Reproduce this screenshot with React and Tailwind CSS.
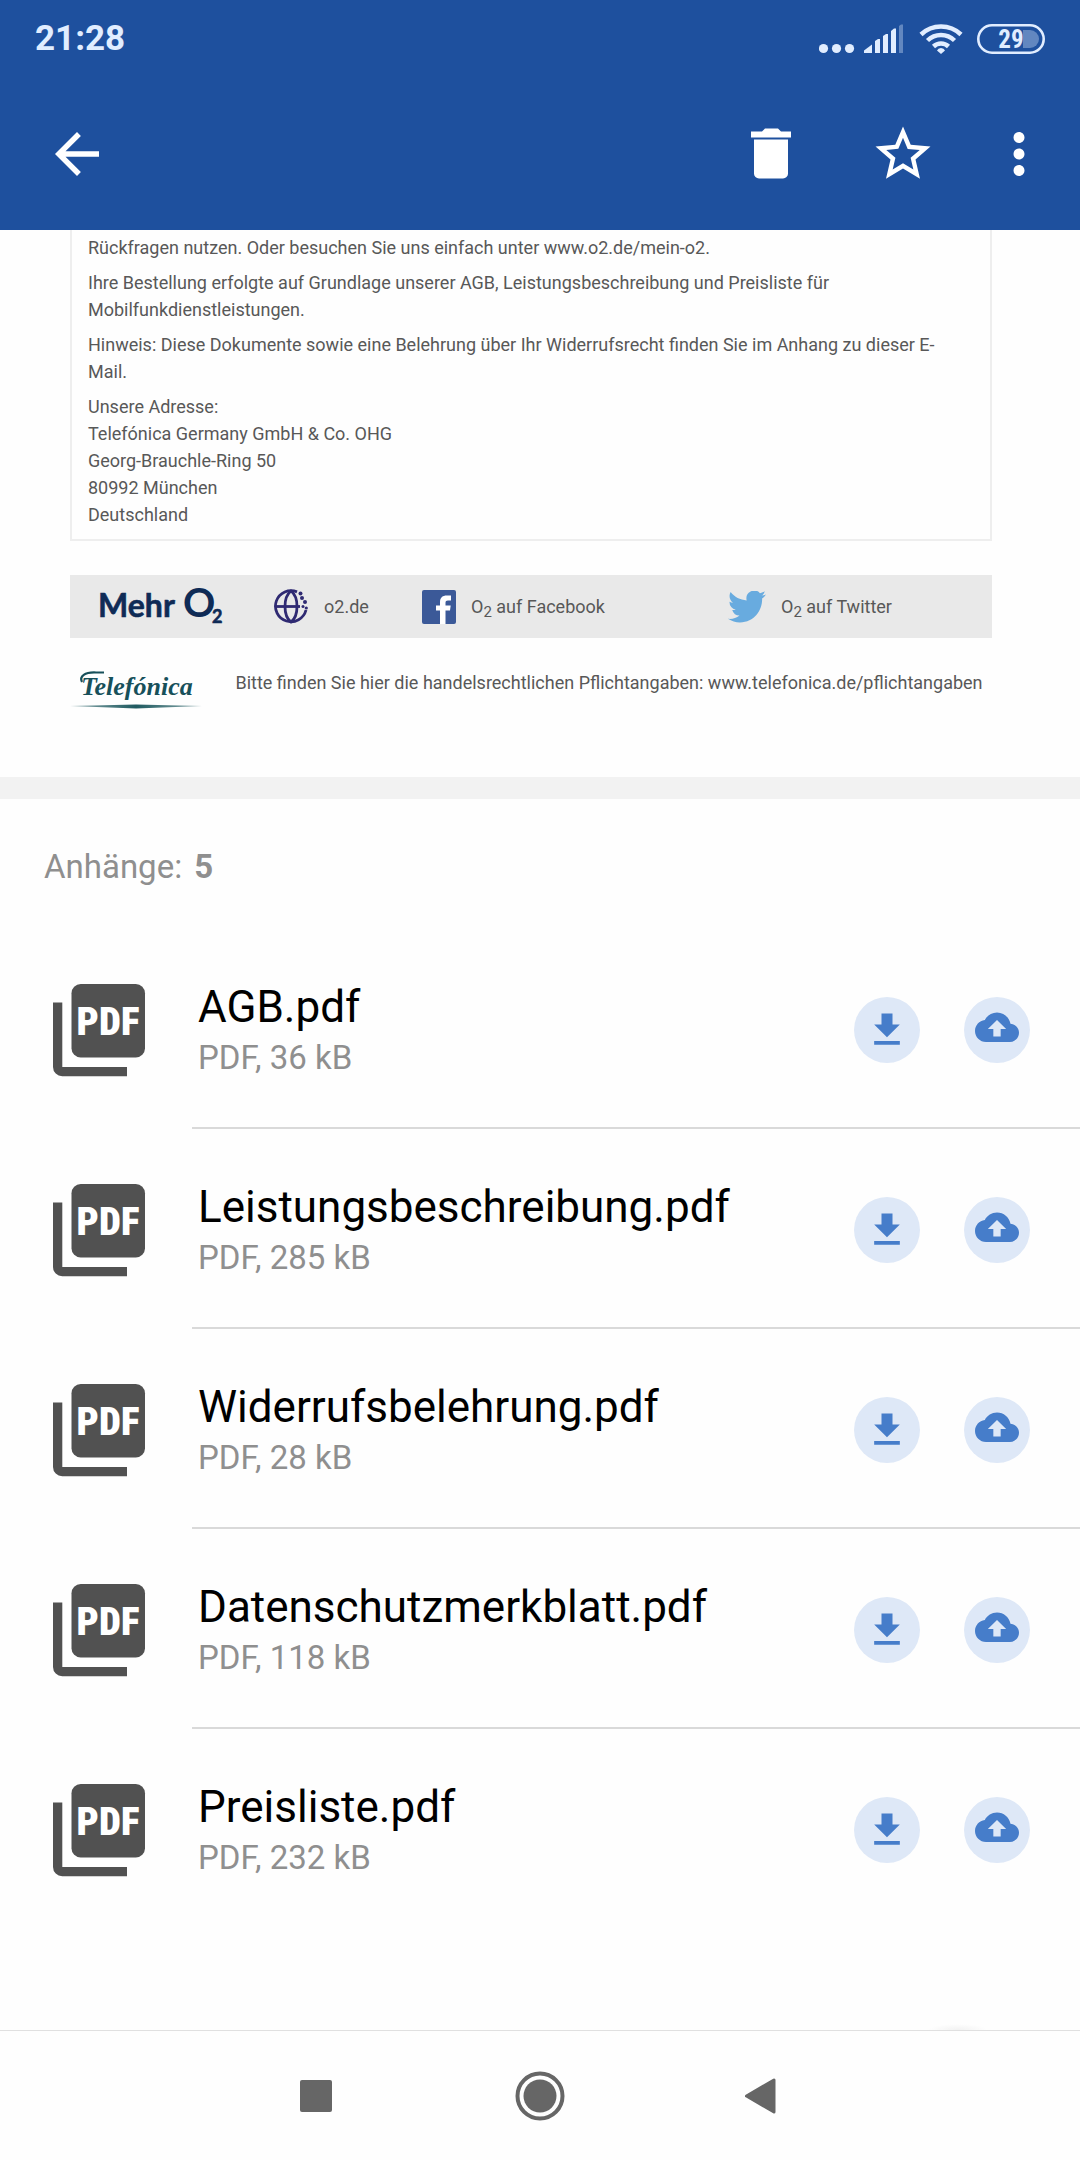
import { MdArrowBack, MdMoreVert, MdStarBorder } from 'react-icons/md';

const attachments = [
  { name: 'AGB.pdf', size: '36 kB' },
  { name: 'Leistungsbeschreibung.pdf', size: '285 kB' },
  { name: 'Widerrufsbelehrung.pdf', size: '28 kB' },
  { name: 'Datenschutzmerkblatt.pdf', size: '118 kB' },
  { name: 'Preisliste.pdf', size: '232 kB' },
];

const StatusBar = () => (
  <div className="flex items-center justify-between h-[77px] px-[35px] text-[#e1edff]">
    <span className="text-[35px] leading-[40px] font-bold">21:28</span>
    <div className="flex items-center">
      <svg width="84" height="30" viewBox="0 0 84 30" fill="currentColor">
        <circle cx="4.500" cy="24.500" r="4.600" />
        <circle cx="17.500" cy="24.500" r="4.600" />
        <circle cx="30.500" cy="24.500" r="4.600" />
        <path d="M45 29v-2.500l8-6v8.500z" />
        <path d="M56 29V17l3-2h2v14z" />
        <path d="M64 29V12l3-2h2v19z" />
        <path d="M72 29V7l3-2.500h2V29z" />
        <path d="M80 29V2l2-1.500h3V29z" opacity="0.350" />
      </svg>
      <svg className="ml-4" width="44" height="30" viewBox="0 0 44 30" fill="none" stroke="currentColor" strokeWidth="4.500">
        <path d="M2 10.500a29 29 0 0 1 40 0" />
        <path d="M8.500 16.500a19.500 19.500 0 0 1 27 0" />
        <path d="M14.500 22.500a11 11 0 0 1 15 0" />
        <path d="M22 30l-4-3.500q1-2.500 4-2.500t4 2.500z" fill="currentColor" stroke="none" />
      </svg>
      <svg className="ml-[14px]" width="68" height="30" viewBox="0 0 68 30">
        <rect x="1.300" y="1.300" width="65.400" height="27.400" rx="13.700" fill="none" stroke="currentColor" strokeWidth="2.600" />
        <path d="M46 6h7a9 9 0 0 1 0 18h-7z" fill="currentColor" opacity="0.350" />
        <text x="34" y="24" textAnchor="middle" fill="currentColor" className="font-['Roboto_Condensed','Roboto',sans-serif] text-[25px] font-bold">29</text>
      </svg>
    </div>
  </div>
);

const Toolbar = () => (
  <div className="flex items-center h-[153px] pl-[44px] pr-[11px] text-white">
    <button type="button" aria-label="Zurück">
      <MdArrowBack size={66} />
    </button>
    <div className="flex items-center ml-auto">
      <button type="button" aria-label="Löschen" className="flex justify-center w-[132px]">
        <svg width="66" height="66" viewBox="0 0 66 66" fill="currentColor">
          <path d="M13 10.500h11l3-3h13l3 3h10v6H13z" />
          <path d="M16 18.500h34v34a5 5 0 0 1-5 5H21a5 5 0 0 1-5-5z" />
        </svg>
      </button>
      <button type="button" aria-label="Markieren" className="flex justify-center w-[132px]">
        <MdStarBorder size={66} />
      </button>
      <button type="button" aria-label="Mehr" className="flex justify-center w-[100px]">
        <MdMoreVert size={66} />
      </button>
    </div>
  </div>
);

const GlobeIcon = () => (
  <svg width="34" height="35" viewBox="0 0 34 35" fill="none" stroke="#2f2a72" strokeWidth="2.800">
    <path d="M23 2.900A15.500 15.500 0 1 0 32 21" />
    <path d="M17 2C9 8 9 27 17 33C25 27 25 8 17 2z" />
    <path d="M2 17.500h24" />
    <g fill="#2f2a72" stroke="none">
      <circle cx="26.500" cy="4.500" r="2" />
      <circle cx="28" cy="9" r="2" />
      <circle cx="31" cy="13" r="2" />
      <circle cx="29" cy="17.500" r="1.500" />
      <circle cx="32.300" cy="19" r="1.600" />
    </g>
  </svg>
);

const FacebookIcon = () => (
  <svg width="34" height="34" viewBox="0 0 34 34">
    <rect width="34" height="34" rx="2" fill="#3b5998" />
    <path d="M18 34V20.500h-4v-5h4V12c0-4.500 3-6.500 6.500-6.500h4.500v5h-3c-1.800 0-2.500.8-2.500 2.200v2.800h5.200l-.7 5h-4.500V34z" fill="#fff" />
  </svg>
);

const TwitterIcon = () => (
  <svg width="38" height="32" viewBox="0 2.500 24 19.600" preserveAspectRatio="none" fill="#68abdf">
    <path d="M23.953 4.570a10 10 0 01-2.825.775 4.958 4.958 0 002.163-2.723c-.951.555-2.005.959-3.127 1.184a4.920 4.920 0 00-8.384 4.482C7.690 8.095 4.067 6.130 1.640 3.162a4.822 4.822 0 00-.666 2.475c0 1.710.870 3.213 2.188 4.096a4.904 4.904 0 01-2.228-.616v.060a4.923 4.923 0 003.946 4.827 4.996 4.996 0 01-2.212.085 4.936 4.936 0 004.604 3.417 9.867 9.867 0 01-6.102 2.105c-.390 0-.779-.023-1.170-.067a13.995 13.995 0 007.557 2.209c9.053 0 13.998-7.496 13.998-13.985 0-.210 0-.420-.015-.630A9.935 9.935 0 0024 4.590z" />
  </svg>
);

const TelefonicaLogo = () => (
  <svg className="shrink-0" width="132" height="42" viewBox="0 0 132 42" role="img" aria-label="Telefónica">
    <defs>
      <linearGradient id="swoosh">
        <stop offset="0" stopColor="#1f5a60" stopOpacity="0.500" />
        <stop offset="0.500" stopColor="#1f5a60" />
        <stop offset="1" stopColor="#1f5a60" stopOpacity="0.500" />
      </linearGradient>
    </defs>
    <text x="11" y="26" fill="#17505a" className="font-['Liberation_Serif',serif] text-[26px] font-bold italic">Telefónica</text>
    <path d="M12 13c-3-6 3-10 14-9.500h8" fill="none" stroke="#17505a" strokeWidth="2.200" />
    <path d="M0 37l66-1.500 66 1.500-66 2.500z" fill="url(#swoosh)" />
  </svg>
);

const PdfIcon = () => (
  <svg width="110" height="110" viewBox="0 0 110 110" fill="#515151">
    <path d="M9 27.500h9.300V92H83v9.200H18.300A9.200 9.200 0 0 1 9 92z" />
    <rect x="27.500" y="9" width="73.500" height="73.500" rx="9.200" />
    <text x="64" y="60" textAnchor="middle" fill="#fff" className="font-['Roboto_Condensed','Roboto',sans-serif] text-[39px] font-black">PDF</text>
  </svg>
);

const DownloadIcon = () => (
  <svg width="44" height="44" viewBox="0 0 24 24" fill="currentColor">
    <path d="M19 9h-4V3H9v6H5l7 7 7-7zM5 18v2h14v-2H5z" />
  </svg>
);

const CloudIcon = () => (
  <svg width="44" height="44" viewBox="0 1.500 24 24" fill="currentColor">
    <path d="M19.350 10.040C18.670 6.590 15.640 4 12 4 9.110 4 6.600 5.640 5.350 8.040 2.340 8.360 0 10.910 0 14c0 3.310 2.690 6 6 6h13c2.760 0 5-2.240 5-5 0-2.640-2.050-4.780-4.650-4.960zM14 13v4h-4v-4H7l5-5 5 5h-3z" />
  </svg>
);

const RoundButton = ({ label, children }) => (
  <button
    type="button"
    aria-label={label}
    className="flex items-center justify-center shrink-0 w-[66px] h-[66px] rounded-full bg-[#dee8f7] text-[#467dca]"
  >
    {children}
  </button>
);

const MailBody = () => (
  <section className="pl-[70px] pr-[88px] pb-[66px] text-[18px] leading-[27px] text-[#585858]">
    <div className="flex flex-col gap-2 border-2 border-t-0 border-[#eee] pt-1 pb-[11px] px-4">
      <p>Rückfragen nutzen. Oder besuchen Sie uns einfach unter www.o2.de/mein-o2.</p>
      <p>Ihre Bestellung erfolgte auf Grundlage unserer AGB, Leistungsbeschreibung und Preisliste für Mobilfunkdienstleistungen.</p>
      <p>
        Hinweis: Diese Dokumente sowie eine Belehrung über Ihr Widerrufsrecht finden Sie im Anhang zu dieser E-<br />
        Mail.
      </p>
      <address className="not-italic">
        Unsere Adresse:<br />
        Telefónica Germany GmbH &amp; Co. OHG<br />
        Georg-Brauchle-Ring 50<br />
        80992 München<br />
        Deutschland
      </address>
    </div>

    <div className="grid grid-cols-[204fr_148fr_306fr_264fr] items-center mt-[34px] h-[63px] bg-[#e9e9e9]">
      <svg className="ml-[26px]" width="130" height="60" viewBox="-2 -8 130 60" fill="#0f2b56" role="img" aria-label="Mehr O2">
        <g className="font-['Lato',sans-serif] font-bold">
          <text x="0" y="32" className="text-[32px]" stroke="#0f2b56" strokeWidth="0.600">Mehr</text>
          <text x="85" y="32" className="text-[40px]">O</text>
          <text x="114" y="38" className="text-[18px]" stroke="#0f2b56" strokeWidth="0.600">2</text>
        </g>
      </svg>
      <a href="#o2" className="flex items-center gap-4">
        <GlobeIcon />
        o2.de
      </a>
      <a href="#facebook" className="flex items-center gap-[15px]">
        <FacebookIcon />
        <span>O<sub className="text-[15px]">2</sub> auf Facebook</span>
      </a>
      <a href="#twitter" className="flex items-center gap-[15px]">
        <TwitterIcon />
        <span>O<sub className="text-[15px]">2</sub> auf Twitter</span>
      </a>
    </div>

    <div className="flex items-start gap-6 pt-[31px]">
      <TelefonicaLogo />
      <p className="flex-1 text-center">Bitte finden Sie hier die handelsrechtlichen Pflichtangaben: www.telefonica.de/pflichtangaben</p>
    </div>
  </section>
);

const AttachmentRow = ({ name, size, last }) => (
  <li className="flex items-start pl-[44px]">
    <div className="shrink-0 pt-[46px]">
      <PdfIcon />
    </div>
    <div className={`flex items-center flex-1 ml-[38px] pl-[6px] pr-[50px] pt-[50px] pb-[46px] border-b-2 ${last ? 'border-transparent' : 'border-[#d9d9d9]'}`}>
      <div className="flex-1">
        <p className="text-[44px] leading-[56px] text-black">{name}</p>
        <p className="text-[33px] leading-[46px] text-[#8f8f8f]">PDF, {size}</p>
      </div>
      <div className="flex gap-[44px]">
        <RoundButton label={`${name} herunterladen`}>
          <DownloadIcon />
        </RoundButton>
        <RoundButton label={`${name} in der Cloud speichern`}>
          <CloudIcon />
        </RoundButton>
      </div>
    </div>
  </li>
);

const NavBar = () => (
  <nav className="relative flex items-center justify-center gap-[172px] h-[130px] border-t border-[#e0e0e0] text-[#666]">
    <div className="absolute right-[92px] -top-[7px] w-[60px] h-[6px] bg-[radial-gradient(ellipse_at_bottom,#f2f2f2,transparent_70%)]" />
    <button type="button" aria-label="Übersicht">
      <svg width="50" height="50" viewBox="0 0 50 50" fill="currentColor">
        <rect x="7" y="9" width="32" height="32" rx="2" />
      </svg>
    </button>
    <button type="button" aria-label="Startseite">
      <svg width="50" height="50" viewBox="0 0 50 50" fill="currentColor">
        <circle cx="25" cy="25" r="22.500" fill="none" stroke="currentColor" strokeWidth="4" />
        <circle cx="25" cy="25" r="16.500" />
      </svg>
    </button>
    <button type="button" aria-label="Zurück">
      <svg width="50" height="50" viewBox="0 0 50 50" fill="currentColor" stroke="currentColor" strokeWidth="3" strokeLinejoin="round">
        <path d="M9.500 25L37 9v32z" />
      </svg>
    </button>
  </nav>
);

export default function App() {
  return (
    <div className="flex flex-col min-h-screen bg-[#fefefe] font-['Roboto',sans-serif]">
      <header className="bg-[#1e509e]">
        <StatusBar />
        <Toolbar />
      </header>
      <main className="flex-1">
        <MailBody />
        <section className="border-t-[22px] border-[#f2f2f2]">
          <h2 className="flex gap-3 pl-[44px] pt-12 pb-[42px] text-[33px] leading-[40px] text-[#8f8f8f]">
            Anhänge: <b>5</b>
          </h2>
          <ul>
            {attachments.map((file, i) => (
              <AttachmentRow key={file.name} {...file} last={i === attachments.length - 1} />
            ))}
          </ul>
        </section>
      </main>
      <NavBar />
    </div>
  );
}
